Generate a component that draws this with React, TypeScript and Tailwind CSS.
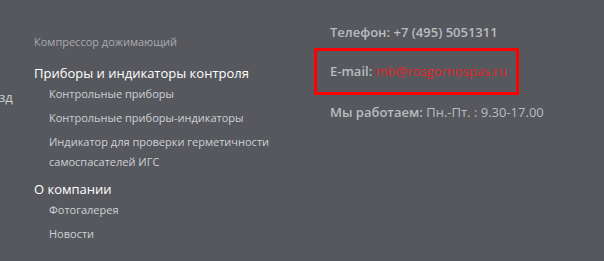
const subItemsA = [
  "Контрольные приборы",
  "Контрольные приборы-индикаторы",
  "Индикатор для проверки герметичности самоспасателей ИГС",
];

const subItemsB = ["Фотогалерея", "Новости"];

const SubList = ({ items }: { items: string[] }) => (
  <ul className="pl-[15px]">
    {items.map((item) => (
      <li key={item} className="py-[2px] text-[11px] leading-[20px] text-[#cfd1d4]">
        {item}
      </li>
    ))}
  </ul>
);

export default function App() {
  return (
    <div
      className="flex h-[261px] w-[604px] overflow-hidden bg-[#56585d]"
      style={{ fontFamily: '"Open Sans", "Liberation Sans", sans-serif' }}
    >
      {/* clipped column on the far left */}
      <div className="w-[34px] shrink-0 pt-[87px] text-[13px] leading-[20px] text-[#cfd1d4]">
        <span className="-ml-[1px]">зд</span>
      </div>

      {/* menu column */}
      <div className="w-[280px] shrink-0 pt-[32px]">
        <div className="text-[11px] leading-[20px] text-[#a9abaf]">Компрессор дожимающий</div>
        <div className="mt-[12px] text-[13px] leading-[18px] text-white">
          Приборы и индикаторы контроля
        </div>
        <div className="w-[240px]">
          <SubList items={subItemsA} />
        </div>
        <div className="mt-[6px] text-[13px] leading-[18px] text-white">О компании</div>
        <SubList items={subItemsB} />
      </div>

      {/* contacts */}
      <div className="pt-[22px] text-[13px] leading-[20px] text-[#b9bcc0]">
        <div className="pl-[16px]">
          <span className="font-semibold">Телефон: +7 (495) 5051311</span>
        </div>
        <div className="mt-[6px] h-[47px] w-[205px] border-[3px] border-[#ff0000] pl-[13px] pt-[10px]">
          <span className="font-semibold">E-mail: </span>
          <span className="text-[#e3262b]">mb@rosgornospas.ru</span>
        </div>
        <div className="mt-[7px] pl-[16px]">
          <span className="font-semibold">Мы работаем:</span> Пн.-Пт. : 9.30-17.00
        </div>
      </div>
    </div>
  );
}
